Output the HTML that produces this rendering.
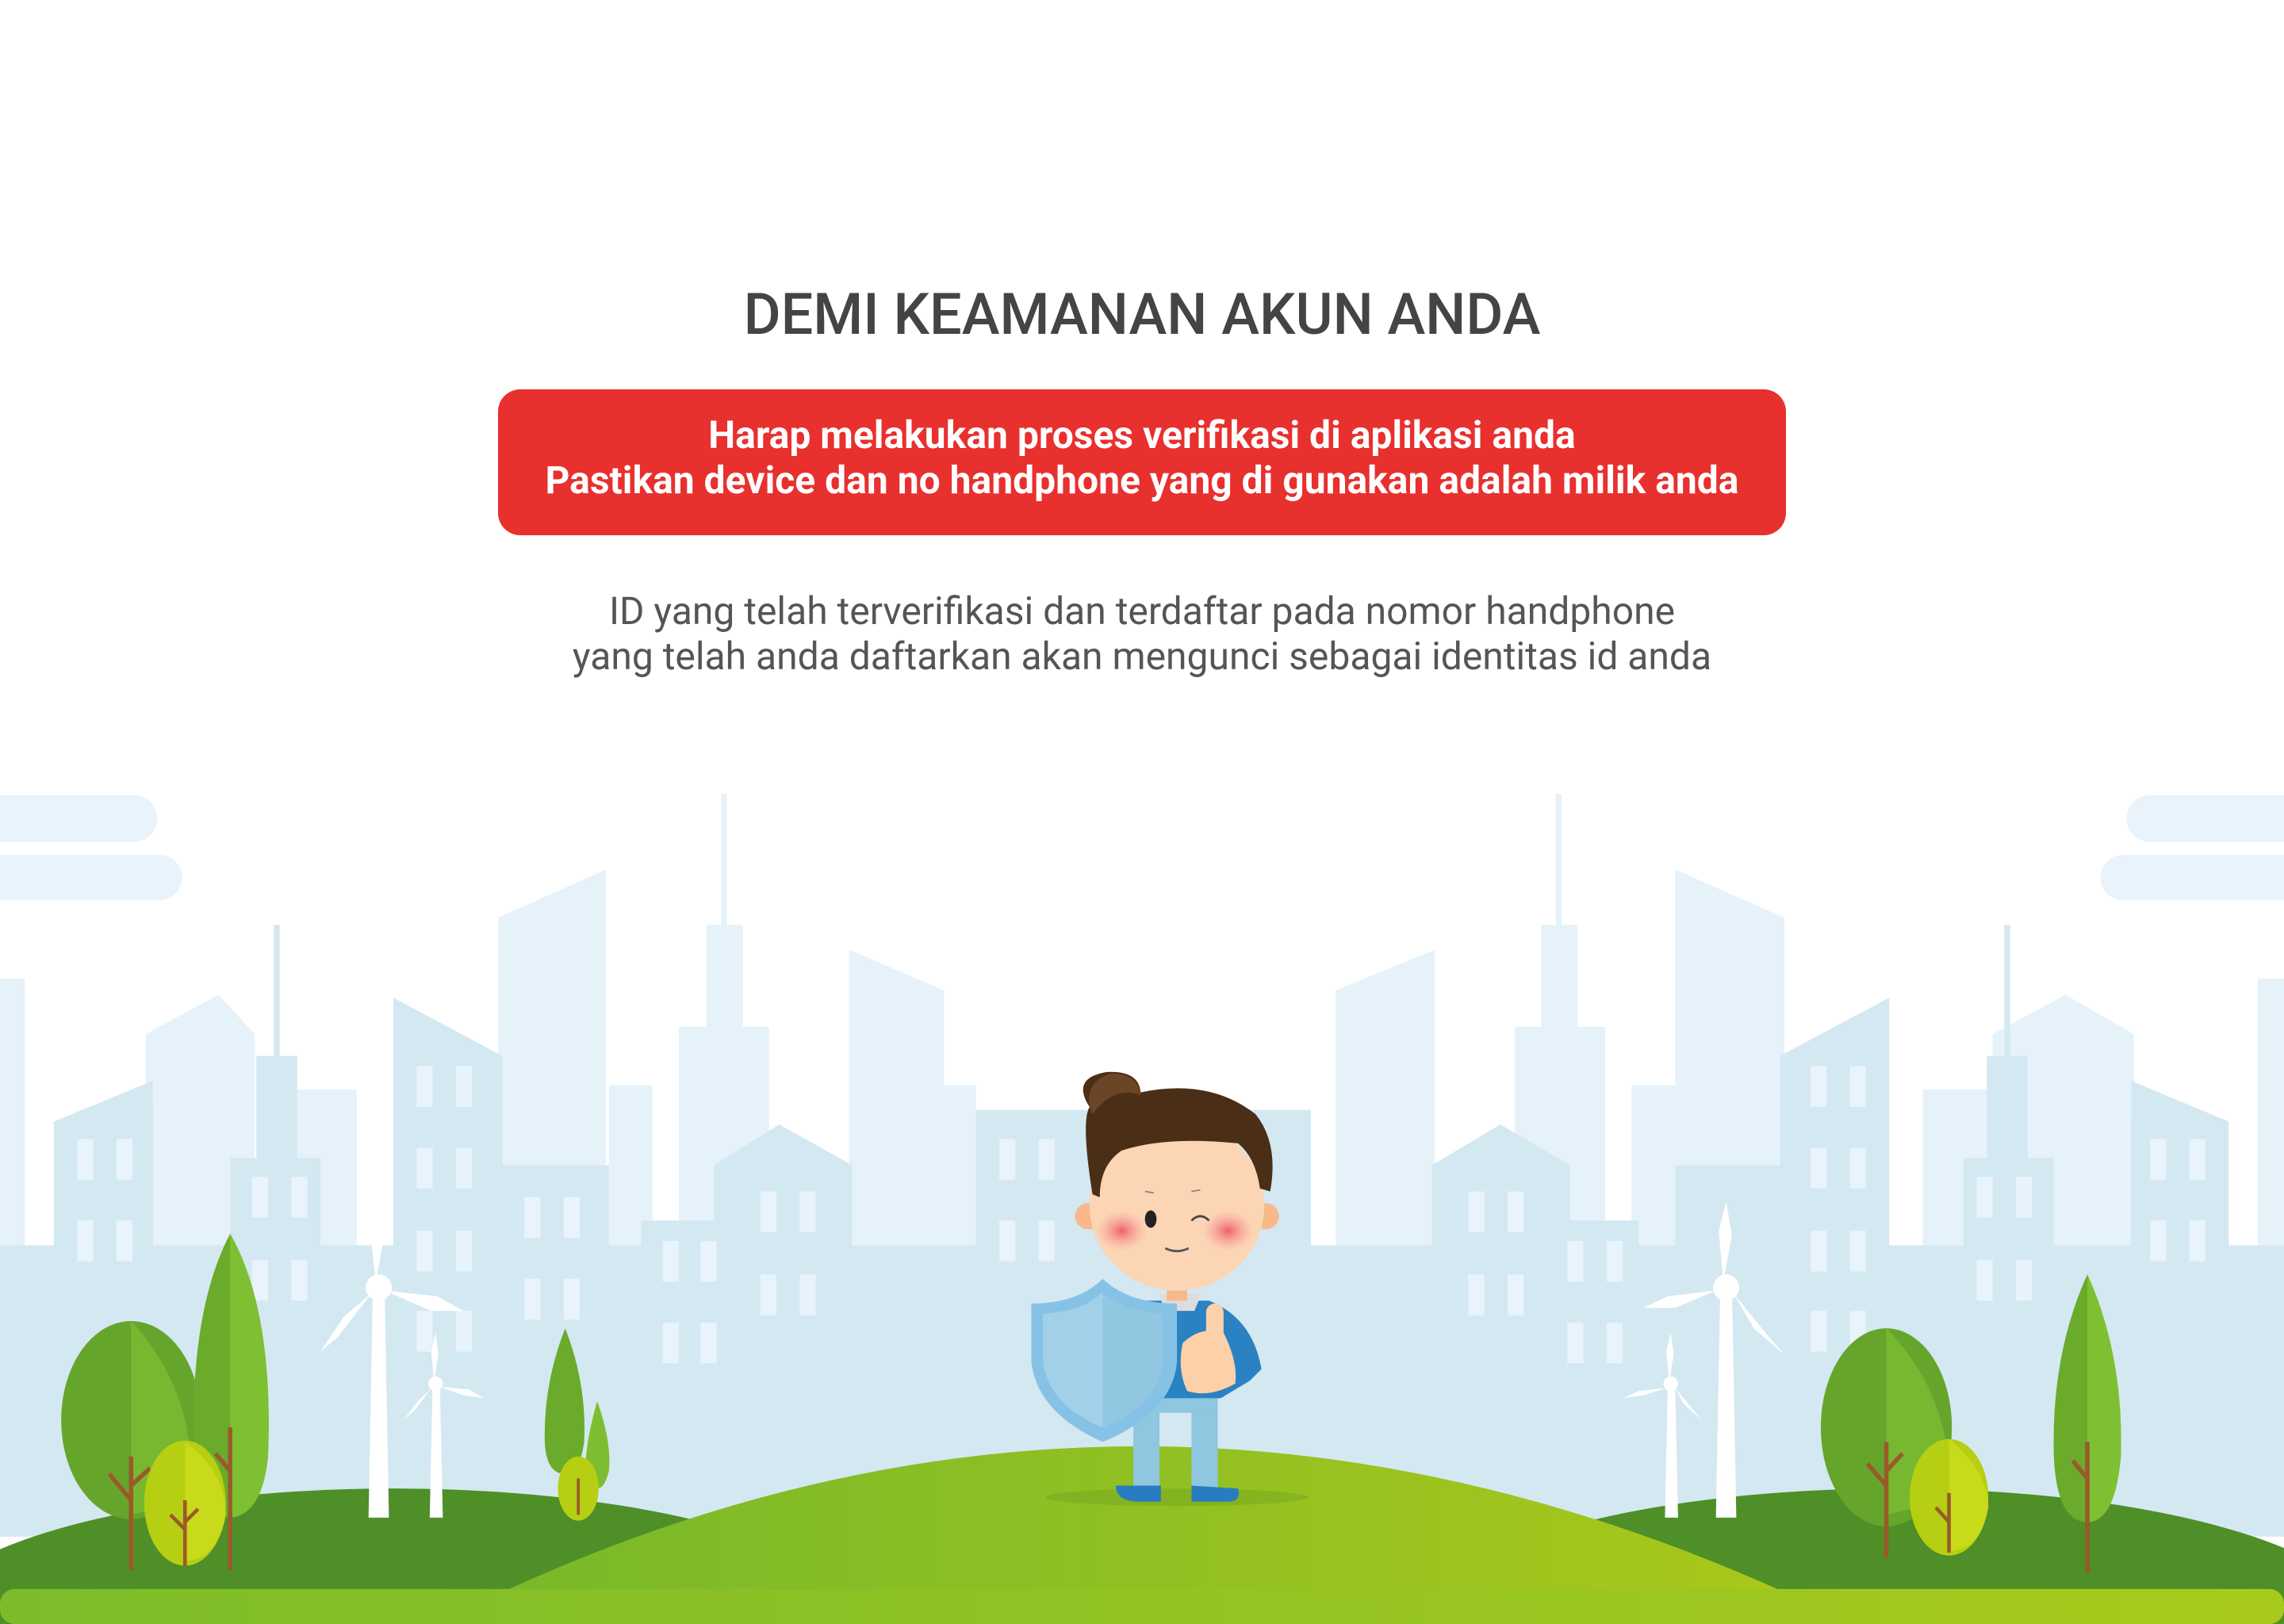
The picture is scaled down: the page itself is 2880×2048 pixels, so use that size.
<!DOCTYPE html>
<html><head><meta charset="utf-8"><style>
html,body{margin:0;padding:0;background:#fff;overflow:hidden;}
body{width:2880px;height:2048px;position:relative;overflow:hidden;font-family:"Roboto","Liberation Sans",sans-serif;}
svg.bg{position:absolute;left:0;top:0;width:2880px;height:2048px;display:block;}
.t{position:absolute;left:0;width:2880px;text-align:center;white-space:nowrap;}
h1{margin:0;position:absolute;top:354px;left:0;width:2880px;text-align:center;font-size:72px;font-weight:500;color:#444;}
.red{position:absolute;left:628px;top:491px;width:1624px;height:184px;background:#e8302e;border-radius:28px;}
.rl{color:#fff;font-weight:bold;font-size:48px;}
.gl{color:#555;font-size:48px;}
</style></head><body>
<svg class="bg" viewBox="0 0 1568 1115" preserveAspectRatio="none">
<defs>
<linearGradient id="hill" x1="0" x2="1"><stop offset="0" stop-color="#78b82a"/><stop offset="1" stop-color="#a9c81a"/></linearGradient>
<linearGradient id="strip" x1="0" x2="1"><stop offset="0" stop-color="#7cbc2a"/><stop offset="1" stop-color="#a8ca1c"/></linearGradient>
<radialGradient id="blush"><stop offset="0" stop-color="#f0606a"/><stop offset="1" stop-color="#f7a0a0" stop-opacity="0"/></radialGradient>
</defs>
<g fill="#e8f3fb">
<rect x="-20" y="546" width="128" height="32" rx="16"/><rect x="-20" y="587" width="145" height="31" rx="15.5"/>
<rect x="1460" y="546" width="130" height="32" rx="16"/><rect x="1442" y="587" width="150" height="31" rx="15.5"/>
</g>
<g fill="#e6f2fa">
<rect x="0" y="672" width="17" height="250"/>
<polygon points="100,710 150,683 175,710 175,900 100,900"/>
<polygon points="342,630 416,597 416,900 342,900"/>
<rect x="495" y="545" width="4" height="95"/><rect x="485" y="635" width="25" height="80"/><rect x="466" y="705" width="62" height="200"/>
<rect x="418" y="745" width="30" height="160"/>
<polygon points="583,652 648,680 648,900 583,900"/>
<rect x="648" y="745" width="22" height="160"/>
<polygon points="917,680 985,652 985,900 917,900"/>
<rect x="1068" y="545" width="4" height="95"/><rect x="1058" y="635" width="25" height="80"/><rect x="1040" y="705" width="62" height="200"/>
<rect x="1120" y="745" width="30" height="160"/>
<polygon points="1150,597 1225,630 1225,900 1150,900"/>
<polygon points="1368,710 1418,683 1465,710 1465,900 1368,900"/>
<rect x="1550" y="672" width="18" height="250"/>
<rect x="200" y="748" width="45" height="160"/><rect x="1320" y="748" width="45" height="160"/>
</g>
<g fill="#d4e8f1">
<polygon points="37,770 105,742 105,900 37,900"/>
<rect x="188" y="635" width="4" height="95"/><rect x="176" y="725" width="28" height="80"/><rect x="158" y="795" width="62" height="110"/>
<polygon points="270,685 345,725 345,900 270,900"/><rect x="345" y="800" width="73" height="100"/>
<rect x="440" y="838" width="50" height="70"/>
<polygon points="490,800 535,772 585,800 585,900 490,900"/>
<rect x="670" y="762" width="230" height="140"/>
<polygon points="983,800 1030,772 1078,800 1078,900 983,900"/>
<rect x="1078" y="838" width="47" height="70"/>
<rect x="1150" y="800" width="75" height="100"/><polygon points="1222,725 1297,685 1297,900 1222,900"/>
<rect x="1376" y="635" width="4" height="95"/><rect x="1364" y="725" width="28" height="80"/><rect x="1348" y="795" width="62" height="110"/>
<polygon points="1463,742 1530,770 1530,900 1463,900"/>
<rect x="0" y="855" width="1568" height="200"/>
</g>
<g fill="#e8f3fb">
<rect x="53" y="782" width="11" height="28"/><rect x="80" y="782" width="11" height="28"/><rect x="53" y="838" width="11" height="28"/><rect x="80" y="838" width="11" height="28"/>
<rect x="173" y="808" width="11" height="28"/><rect x="200" y="808" width="11" height="28"/><rect x="173" y="865" width="11" height="28"/><rect x="200" y="865" width="11" height="28"/>
<rect x="286" y="732" width="11" height="28"/><rect x="313" y="732" width="11" height="28"/><rect x="286" y="788" width="11" height="28"/><rect x="313" y="788" width="11" height="28"/><rect x="286" y="845" width="11" height="28"/><rect x="313" y="845" width="11" height="28"/><rect x="286" y="900" width="11" height="28"/><rect x="313" y="900" width="11" height="28"/>
<rect x="360" y="822" width="11" height="28"/><rect x="387" y="822" width="11" height="28"/><rect x="360" y="878" width="11" height="28"/><rect x="387" y="878" width="11" height="28"/>
<rect x="455" y="852" width="11" height="28"/><rect x="455" y="908" width="11" height="28"/><rect x="481" y="852" width="11" height="28"/><rect x="481" y="908" width="11" height="28"/>
<rect x="522" y="818" width="11" height="28"/><rect x="549" y="818" width="11" height="28"/><rect x="522" y="875" width="11" height="28"/><rect x="549" y="875" width="11" height="28"/>
<rect x="686" y="782" width="11" height="28"/><rect x="713" y="782" width="11" height="28"/><rect x="686" y="838" width="11" height="28"/><rect x="713" y="838" width="11" height="28"/>
<rect x="1008" y="818" width="11" height="28"/><rect x="1035" y="818" width="11" height="28"/><rect x="1008" y="875" width="11" height="28"/><rect x="1035" y="875" width="11" height="28"/>
<rect x="1076" y="852" width="11" height="28"/><rect x="1103" y="852" width="11" height="28"/><rect x="1076" y="908" width="11" height="28"/><rect x="1103" y="908" width="11" height="28"/>
<rect x="1243" y="732" width="11" height="28"/><rect x="1270" y="732" width="11" height="28"/><rect x="1243" y="788" width="11" height="28"/><rect x="1270" y="788" width="11" height="28"/><rect x="1243" y="845" width="11" height="28"/><rect x="1270" y="845" width="11" height="28"/><rect x="1243" y="900" width="11" height="28"/><rect x="1270" y="900" width="11" height="28"/>
<rect x="1357" y="808" width="11" height="28"/><rect x="1384" y="808" width="11" height="28"/><rect x="1357" y="865" width="11" height="28"/><rect x="1384" y="865" width="11" height="28"/>
<rect x="1476" y="782" width="11" height="28"/><rect x="1503" y="782" width="11" height="28"/><rect x="1476" y="838" width="11" height="28"/><rect x="1503" y="838" width="11" height="28"/>
</g>
<ellipse cx="270" cy="1120" rx="330" ry="98" fill="#4f8f27"/>
<ellipse cx="1300" cy="1120" rx="330" ry="98" fill="#4f8f27"/>
<g fill="#fff">
<polygon points="256,884 264,884 267,1042 253,1042"/><circle cx="260" cy="884" r="9"/>
<path d="M258,880 L254,845 L260,825 L264,848 Z"/><path d="M264,886 L300,890 L318,900 L296,900 Z"/><path d="M255,888 L232,918 L220,928 L236,904 Z"/>
<polygon points="297,950 302,950 304,1042 295,1042"/><circle cx="299" cy="950" r="5"/>
<path d="M298,948 L296,928 L299,915 L301,930 Z"/><path d="M302,952 L322,954 L332,960 L318,958 Z"/><path d="M296,953 L285,968 L277,975 L287,962 Z"/>
<polygon points="1181,884 1189,884 1192,1042 1178,1042"/><circle cx="1185" cy="884" r="9"/>
<path d="M1183,880 L1180,845 L1185,825 L1189,848 Z"/><path d="M1190,888 L1212,915 L1225,930 L1204,912 Z"/><path d="M1178,886 L1145,890 L1128,898 L1150,898 Z"/>
<polygon points="1145,950 1150,950 1152,1042 1143,1042"/><circle cx="1147" cy="950" r="5"/>
<path d="M1146,948 L1144,928 L1147,915 L1149,930 Z"/><path d="M1150,953 L1160,965 L1168,975 L1156,964 Z"/><path d="M1144,953 L1125,955 L1114,960 L1128,958 Z"/>
</g>
<path d="M330,1100 Q780,886 1240,1100 Z" fill="url(#hill)"/>
<rect x="0" y="1091" width="1568" height="24" rx="10" fill="url(#strip)"/>
<g>
<ellipse cx="90" cy="975" rx="48" ry="68" fill="#66a52c"/><path d="M90,907 Q138,960 130,1030 L90,1040 Z" fill="#78b830"/>
<path d="M90,1000 L90,1078 M90,1030 L75,1012 M90,1020 L103,1008" stroke="#9a5a2a" stroke-width="3" fill="none"/>
<path d="M158,847 Q188,900 184,1000 Q180,1040 158,1042 Q134,1040 133,1000 Q130,900 158,847Z" fill="#6aab2c"/><path d="M158,847 Q188,900 184,1000 Q180,1040 158,1042Z" fill="#7fbf32"/>
<path d="M158,980 L158,1078 M158,1010 L148,998" stroke="#9a5a2a" stroke-width="3" fill="none"/>
<ellipse cx="127" cy="1032" rx="28" ry="43" fill="#b6cf12"/><path d="M127,990 Q155,1010 155,1040 Q150,1070 127,1072Z" fill="#c8da1a"/>
<path d="M127,1030 L127,1075 M127,1050 L117,1040 M127,1045 L136,1036" stroke="#9a5a2a" stroke-width="2.5" fill="none"/>
<path d="M388,912 Q403,950 401,990 Q398,1012 388,1012 Q375,1012 374,990 Q373,950 388,912Z" fill="#6aab2c"/>
<path d="M410,962 Q420,990 418,1010 Q415,1022 410,1022 Q402,1022 402,1008 Q402,990 410,962Z" fill="#7dbd30"/>
<ellipse cx="397" cy="1022" rx="14" ry="22" fill="#b6cf12"/><path d="M397,1015 L397,1040" stroke="#9a5a2a" stroke-width="2"/>
</g>
<g>
<ellipse cx="1295" cy="980" rx="45" ry="68" fill="#66a52c"/><path d="M1295,912 Q1342,960 1338,1030 L1295,1040 Z" fill="#78b830"/>
<path d="M1295,990 L1295,1070 M1295,1020 L1282,1005 M1295,1010 L1306,998" stroke="#9a5a2a" stroke-width="3" fill="none"/>
<ellipse cx="1338" cy="1028" rx="27" ry="40" fill="#b6cf12"/><path d="M1338,988 Q1365,1010 1365,1035 Q1360,1064 1338,1065Z" fill="#c8da1a"/>
<path d="M1338,1025 L1338,1066 M1338,1045 L1329,1035" stroke="#9a5a2a" stroke-width="2.5" fill="none"/>
<path d="M1433,875 Q1458,930 1456,1000 Q1452,1045 1433,1045 Q1412,1045 1410,1000 Q1408,930 1433,875Z" fill="#6aab2c"/><path d="M1433,875 Q1458,930 1456,1000 Q1452,1045 1433,1045Z" fill="#7fbf32"/>
<path d="M1433,990 L1433,1080 M1433,1015 L1423,1003" stroke="#9a5a2a" stroke-width="3" fill="none"/>
</g>
<g>
<ellipse cx="808" cy="1028" rx="90" ry="6" fill="#6a9a20" opacity="0.35"/>
<rect x="778" y="960" width="18" height="65" fill="#8fc6e0"/><rect x="818" y="960" width="18" height="65" fill="#8fc6e0"/>
<path d="M766,1020 Q766,1030 780,1031 L797,1031 L797,1020 Z" fill="#2a7cc0"/><path d="M818,1020 L818,1031 L845,1031 Q852,1030 850,1022 Z" fill="#2a7cc0"/>
<rect x="778" y="950" width="58" height="20" fill="#8fc6e0"/>
<path d="M785,893 L830,893 Q860,905 866,940 L858,948 L838,960 L785,960Z" fill="#2a82c2"/>
<path d="M795,888 L825,888 L820,900 L800,900Z" fill="#ddd"/>
<path d="M812,922 Q825,910 840,915 Q850,935 848,950 Q830,960 815,955 Q808,940 812,922Z" fill="#fcd0a8"/>
<rect x="828" y="895" width="12" height="25" rx="6" fill="#fcd0a8"/>
<path d="M708,895 Q740,895 757,878 Q775,895 808,895 L808,935 Q805,970 757,990 Q712,970 708,935Z" fill="#86c2e6"/>
<path d="M716,902 Q745,900 757,887 Q770,900 798,902 L798,935 Q795,965 757,980 Q720,965 716,935Z" fill="#a3d0e9"/>
<path d="M757,887 Q770,900 798,902 L798,935 Q795,965 757,980Z" fill="#92c7e2"/>
<circle cx="747" cy="835" r="9" fill="#f8b88a"/><circle cx="869" cy="835" r="9" fill="#f8b88a"/>
<ellipse cx="808" cy="828" rx="60" ry="58" fill="#fcd5b4"/>
<path d="M808,886 L808,893" stroke="#f8b88a" stroke-width="14"/>
<ellipse cx="770" cy="845" rx="18" ry="14" fill="url(#blush)"/><ellipse cx="843" cy="845" rx="18" ry="14" fill="url(#blush)"/>
<ellipse cx="790" cy="837" rx="4" ry="6" fill="#222"/>
<path d="M818,838 Q824,832 830,838" stroke="#444" stroke-width="1.5" fill="none"/>
<path d="M800,857 Q808,861 816,857" stroke="#555" stroke-width="1.5" fill="none"/>
<path d="M786,818 L792,819 M818,818 L824,817" stroke="#888" stroke-width="1"/>
<path d="M750,820 Q742,770 748,760 Q735,740 760,736 Q782,735 783,750 Q830,740 862,765 Q878,785 872,818 L865,816 Q862,795 850,785 Q800,780 770,790 Q755,800 755,822Z" fill="#4a2e16"/>
<path d="M748,760 Q745,742 763,737 Q782,737 783,752 Q765,745 750,765Z" fill="#6a4526"/>
</g>
</svg>
<h1>DEMI KEAMANAN AKUN ANDA</h1>
<div class="red"></div>
<div class="t rl" style="top:520px;">Harap melakukan proses verifikasi di aplikasi anda</div>
<div class="t rl" style="top:577px;">Pastikan device dan no handphone yang di gunakan adalah milik anda</div>
<div class="t gl" style="top:742px;">ID yang telah terverifikasi dan terdaftar pada nomor handphone</div>
<div class="t gl" style="top:799px;">yang telah anda daftarkan akan mengunci sebagai identitas id anda</div>
</body></html>
